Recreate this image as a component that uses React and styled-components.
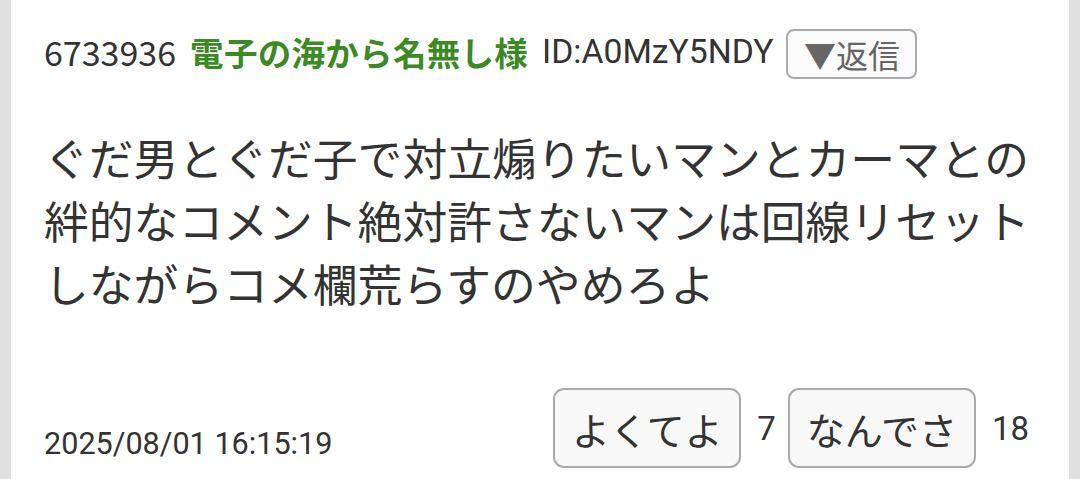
import React from "react";
import styled, { createGlobalStyle } from "styled-components";

const GlobalStyle = createGlobalStyle`
  html, body {
    margin: 0;
    padding: 0;
    background: #e0e0e0;
  }
  body {
    font-family: Roboto, "Noto Sans CJK JP", sans-serif;
    color: #333;
  }
`;

const Page = styled.div`
  height: 479px;
  padding: 0 11px;
  overflow: hidden;
`;

const Card = styled.article`
  background: #fff;
  height: 100%;
  padding: 29px 28px 0 33px;
  box-sizing: border-box;
  display: flex;
  flex-direction: column;
`;

const Header = styled.div`
  display: flex;
  align-items: center;
  gap: 14px;
  height: 50px;
  white-space: nowrap;
`;

const ResNo = styled.span`
  font-family: "Noto Sans CJK JP", sans-serif;
  font-size: 34px;
  line-height: 1;
  margin-top: -4px;
  color: #333;
`;

const Name = styled.span`
  font-family: "Noto Sans CJK JP", sans-serif;
  font-weight: 700;
  font-size: 33.5px;
  line-height: 1;
  margin-top: -4px;
  color: #3b8a24;
  letter-spacing: 0.3px;
`;

const Uid = styled.span`
  font-family: Roboto, sans-serif;
  font-size: 33.7px;
  line-height: 1;
  margin-top: -4px;
  color: #333;
`;

const ReplyButton = styled.button`
  box-sizing: border-box;
  width: 131px;
  height: 50px;
  margin-left: -1px;
  border: 2px solid #aaa;
  border-radius: 8px;
  background: #fafafa;
  color: #666;
  font-family: "Noto Sans CJK JP", sans-serif;
  font-size: 32px;
  line-height: 1;
  padding: 0;
  display: flex;
  align-items: center;
  justify-content: center;
`;

const Body = styled.p`
  margin: 46px 0 0;
  font-family: "Noto Sans CJK JP", sans-serif;
  font-size: 44.8px;
  line-height: 63px;
  color: #333;
  white-space: nowrap;
`;

const Footer = styled.div`
  margin-top: auto;
  margin-bottom: 11px;
  padding-right: 12px;
  display: flex;
  align-items: flex-end;
  justify-content: space-between;
`;

const Stamp = styled.span`
  font-family: Roboto, sans-serif;
  font-size: 30.6px;
  color: #333;
  margin-bottom: 7px;
`;

const Votes = styled.div`
  display: flex;
  align-items: center;
`;

const VoteButton = styled.button`
  box-sizing: border-box;
  width: 188px;
  height: 80px;
  border: 2px solid #aaa;
  border-radius: 11px;
  background: #f8f8f8;
  color: #333;
  font-family: "Noto Sans CJK JP", sans-serif;
  font-size: 38px;
  padding: 0;
`;

const Count = styled.span`
  font-family: Roboto, sans-serif;
  font-size: 33px;
  color: #333;
  padding: 0 ${(p) => p.$pad}px 0 16px;
`;

const App = () => {
  return (
    <Page>
      <GlobalStyle />
      <Card>
        <Header>
          <ResNo>6733936</ResNo>
          <Name>電子の海から名無し様</Name>
          <Uid>ID:A0MzY5NDY</Uid>
          <ReplyButton>▼返信</ReplyButton>
        </Header>
        <Body>
          ぐだ男とぐだ子で対立煽りたいマンとカーマとの
          <br />
          絆的なコメント絶対許さないマンは回線リセット
          <br />
          しながらコメ欄荒らすのやめろよ
        </Body>
        <Footer>
          <Stamp>2025/08/01 16:15:19</Stamp>
          <Votes>
            <VoteButton>よくてよ</VoteButton>
            <Count $pad={12}>7</Count>
            <VoteButton>なんでさ</VoteButton>
            <Count $pad={0}>18</Count>
          </Votes>
        </Footer>
      </Card>
    </Page>
  );
};

export default App;
